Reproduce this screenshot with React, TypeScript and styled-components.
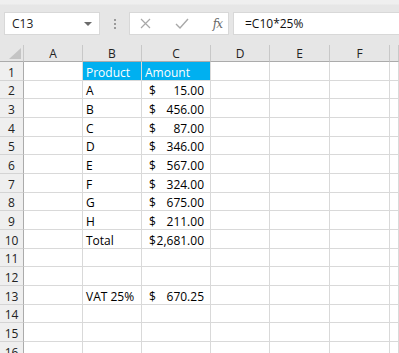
import React from "react";
import styled, { createGlobalStyle } from "styled-components";

const Global = createGlobalStyle`
  html, body { margin: 0; padding: 0; background: #e6e6e6; }
  body { font-family: "Open Sans", "Noto Sans", sans-serif; overflow: hidden; }
`;

const Page = styled.div`
  width: 399px;
  height: 353px;
  display: flex;
  flex-direction: column;
  background: #e6e6e6;
  overflow: hidden;
`;

const Toolbar = styled.div`
  height: 45px;
  flex: none;
  display: flex;
  align-items: flex-start;
  padding: 12px 0 0 4px;
  box-sizing: border-box;
  background: linear-gradient(#efefef 0, #efefef 4px, #e6e6e6 5px);
`;

const Box = styled.div`
  height: 23px;
  background: #fff;
  border: 1px solid #d8d8d8;
  box-sizing: border-box;
  display: flex;
  align-items: center;
`;

const NameBox = styled(Box)`
  width: 96px;
  padding: 0 6px 0 7px;
  justify-content: space-between;
  font-size: 12px;
  color: #222;
`;

const Caret = styled.span`
  width: 0;
  height: 0;
  border-left: 4px solid transparent;
  border-right: 4px solid transparent;
  border-top: 4px solid #6b6b6b;
  margin-right: 1px;
`;

const Grip = styled.div`
  width: 28px;
  height: 23px;
  display: flex;
  flex-direction: column;
  align-items: center;
  justify-content: center;
  gap: 2px;
  margin-left: 1px;
`;

const Dot = styled.span`
  width: 2px;
  height: 2px;
  background: #9a9a9a;
`;

const FuncBox = styled(Box)`
  width: 100px;
  padding: 0 6px 0 10px;
  justify-content: space-between;
`;

const Fx = styled.span`
  font-family: "DejaVu Serif", "Liberation Serif", serif;
  font-style: italic;
  font-size: 12px;
  color: #6a6a6a;
  letter-spacing: -1px;
`;

const FormulaBox = styled(Box)`
  flex: 1;
  margin-left: 4px;
  padding-left: 11px;
  border-right: none;
  font-size: 12px;
  color: #111;
`;

const Sheet = styled.div`
  flex: 1;
  display: grid;
  grid-template-columns: 24px 59px 59px 69px 59px 60px 60px 1fr;
  align-content: start;
  background: #fff;
`;

const Corner = styled.div`
  height: 17px;
  background: #e6e6e6;
  border-right: 1px solid #c8c8c8;
  border-bottom: 1px solid #ababab;
  box-sizing: border-box;
  position: relative;
  &::after {
    content: "";
    position: absolute;
    right: 2px;
    bottom: 2px;
    width: 0;
    height: 0;
    border-left: 12px solid transparent;
    border-bottom: 11px solid #c4c4c4;
  }
`;

const ColHead = styled.div`
  height: 17px;
  background: #e6e6e6;
  border-right: 1px solid #c8c8c8;
  border-bottom: 1px solid #ababab;
  box-sizing: border-box;
  display: flex;
  align-items: flex-end;
  justify-content: center;
  font-size: 12px;
  line-height: 14px;
  color: #222;
`;

const RowHead = styled.div<{ $h: number }>`
  height: ${(p) => p.$h}px;
  background: #efefef;
  border-right: 1px solid #ababab;
  border-bottom: 1px solid #d4d4d4;
  box-sizing: border-box;
  display: flex;
  align-items: flex-end;
  justify-content: center;
  font-size: 12px;
  line-height: 14px;
  color: #222;
`;

const Cell = styled.div<{ $h: number; $fill?: boolean }>`
  height: ${(p) => p.$h}px;
  border-right: 1px solid #d9d9d9;
  border-bottom: 1px solid #d9d9d9;
  box-sizing: border-box;
  background: ${(p) => (p.$fill ? "#00b0f0" : "#fff")};
  color: ${(p) => (p.$fill ? "#fff" : "#000")};
  display: flex;
  align-items: flex-end;
  padding: 0 3px;
  font-size: 12px;
  line-height: 14px;
  white-space: nowrap;
  overflow: hidden;
`;

const Money = styled.span`
  flex: 1;
  display: flex;
  justify-content: space-between;
  padding: 0 3px 0 4px;
`;

const Icon = styled.svg`
  display: block;
`;

const heights = [19, 18, 19, 19, 18, 19, 19, 18, 19, 19, 18, 19, 19, 18, 19, 19];

type Row = { b?: string; c?: string; head?: boolean };
const data: Row[] = [
  { b: "Product", c: "Amount", head: true },
  { b: "A", c: "15.00" },
  { b: "B", c: "456.00" },
  { b: "C", c: "87.00" },
  { b: "D", c: "346.00" },
  { b: "E", c: "567.00" },
  { b: "F", c: "324.00" },
  { b: "G", c: "675.00" },
  { b: "H", c: "211.00" },
  { b: "Total", c: "2,681.00" },
  {},
  {},
  { b: "VAT 25%", c: "670.25" },
  {},
  {},
  {},
];

export default function App() {
  return (
    <Page>
      <Global />
      <Toolbar>
        <NameBox>
          <span>C13</span>
          <Caret />
        </NameBox>
        <Grip>
          <Dot />
          <Dot />
          <Dot />
        </Grip>
        <FuncBox>
          <Icon width="11" height="11" viewBox="0 0 11 11">
            <path d="M1 1 L10 10 M10 1 L1 10" stroke="#a8a8a8" strokeWidth="1.2" fill="none" />
          </Icon>
          <Icon width="14" height="11" viewBox="0 0 14 11">
            <path d="M1 6 L5 10 L13 1" stroke="#a8a8a8" strokeWidth="1.4" fill="none" />
          </Icon>
          <Fx>fx</Fx>
        </FuncBox>
        <FormulaBox>=C10*25%</FormulaBox>
      </Toolbar>
      <Sheet>
        <Corner />
        {["A", "B", "C", "D", "E", "F", ""].map((l, i) => (
          <ColHead key={i}>{l}</ColHead>
        ))}
        {data.map((r, i) => {
          const h = heights[i];
          return (
            <React.Fragment key={i}>
              <RowHead $h={h}>{i + 1}</RowHead>
              <Cell $h={h} />
              <Cell $h={h} $fill={r.head}>{r.b}</Cell>
              <Cell $h={h} $fill={r.head}>
                {r.head ? (
                  r.c
                ) : r.c ? (
                  <Money>
                    <span>$</span>
                    <span>{r.c}</span>
                  </Money>
                ) : null}
              </Cell>
              <Cell $h={h} />
              <Cell $h={h} />
              <Cell $h={h} />
              <Cell $h={h} />
            </React.Fragment>
          );
        })}
      </Sheet>
    </Page>
  );
}
